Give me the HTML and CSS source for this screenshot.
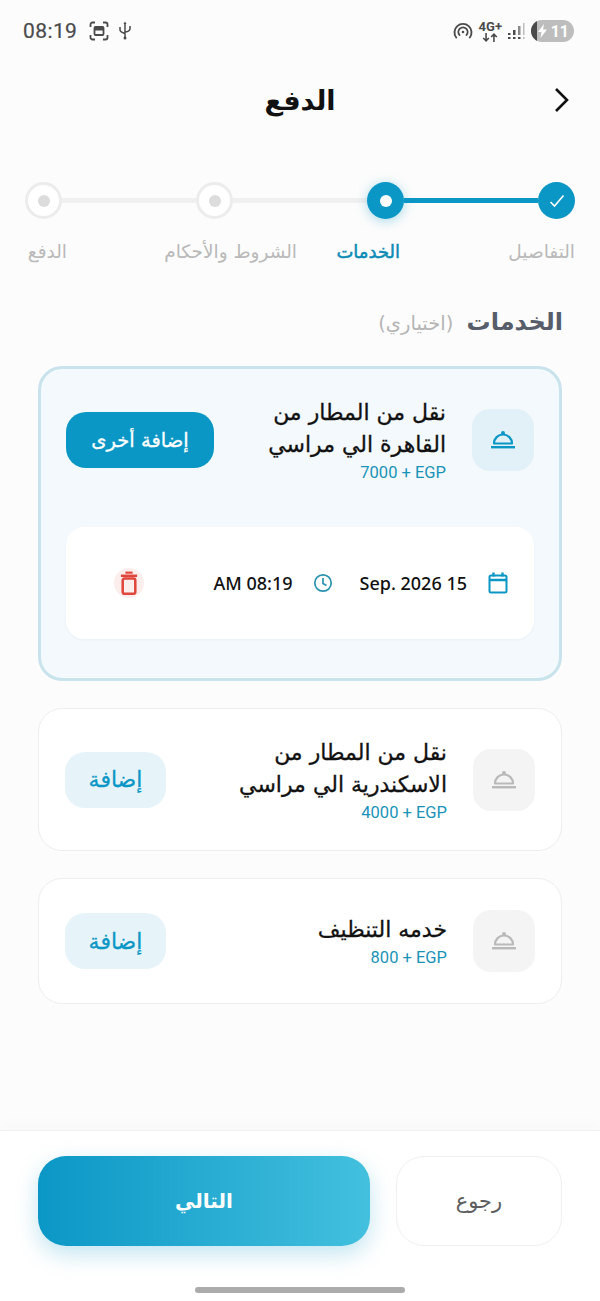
FILE: index.html
```html
<!DOCTYPE html>
<html lang="ar" dir="rtl">

<head>
    <meta charset="UTF-8">
    <meta name="viewport" content="width=device-width, initial-scale=1.0">
    <title>الدفع</title>
    <link rel="stylesheet" href="styles.css">
</head>

<body>
    <svg class="defs" width="0" height="0" aria-hidden="true">
        <symbol id="cloche" viewBox="0 0 26 20">
            <path d="M4 13.5a9 9 0 0 1 18 0z" fill="none" stroke="currentColor" stroke-width="2.2" stroke-linejoin="round"/>
            <circle cx="13" cy="3" r="2" fill="currentColor"/>
            <rect x="1" y="16" width="24" height="2.4" fill="currentColor"/>
        </symbol>
    </svg>

    <!-- status bar -->
    <div class="status-bar" dir="ltr">
        <div class="status-left">
            <span class="status-time">08:19</span>
            <svg width="20" height="20" viewBox="0 0 20 20" fill="none" stroke="#4a4a4a" stroke-width="1.8">
                <path d="M1.5 6V3.5a2 2 0 0 1 2-2H6M14 1.500h2.500a2 2 0 0 1 2 2V6M18.500 14v2.500a2 2 0 0 1-2 2H14M6 18.500H3.500a2 2 0 0 1-2-2V14"/>
                <rect x="5.500" y="6" width="9" height="8" rx="1"/>
                <rect x="6" y="6.500" width="8" height="3" fill="#4a4a4a" stroke="none"/>
            </svg>
            <svg width="14" height="20" viewBox="0 0 14 20" fill="none" stroke="#4a4a4a" stroke-width="1.500">
                <path d="M7 2v15M2 6v2.500c0 1.500 1 2.500 2.500 3L7 12.500M12 5v2.500c0 1.500-1 2.500-2.500 3L7 11"/>
                <circle cx="7" cy="17" r="1.500" fill="#4a4a4a" stroke="none"/>
                <path d="M7 .5l1.500 2.500h-3z" fill="#4a4a4a" stroke="none"/>
            </svg>
        </div>
        <div class="status-right">
            <svg width="20" height="20" viewBox="0 0 20 20" fill="none" stroke="#4a4a4a" stroke-width="1.900" stroke-linecap="round">
                <path d="M3.200 16.500a8.500 8.500 0 1 1 13.600 0"/>
                <path d="M6.500 14a4.600 4.600 0 1 1 7 0"/>
                <circle cx="10" cy="11" r="1.300" fill="#4a4a4a" stroke="none"/>
            </svg>
            <span class="status-net">4G+<svg width="16" height="9" viewBox="0 0 14 8" fill="none" stroke="#4a4a4a" stroke-width="1.400"><path d="M3.500 0v7M1 4.500L3.500 7 6 4.500M10.500 8V1M8 3.500L10.500 1 13 3.500"/></svg></span>
            <svg width="17" height="18" viewBox="0 0 17 18" fill="#4a4a4a">
                <rect x="0" y="11" width="2.500" height="2"/><rect x="0" y="15" width="2.500" height="2"/>
                <rect x="5" y="8" width="2.500" height="5"/><rect x="5" y="15" width="2.500" height="2"/>
                <rect x="10" y="4" width="2.500" height="9" fill="#8a8a8a"/><rect x="10" y="15" width="2.500" height="2"/>
                <rect x="15" y="1" width="1.500" height="12" fill="#bdbdbd"/><rect x="15" y="15" width="1.500" height="2" fill="#bdbdbd"/>
            </svg>
            <span class="status-battery">
                <span class="battery-level"></span>
                <svg width="9" height="14" viewBox="0 0 9 14" fill="#fff"><path d="M6 0L0 8h3.500L2.500 14 9 5.500H5z"/></svg>
                <span>11</span>
            </span>
        </div>
    </div>

    <!-- header -->
    <header class="top-bar">
        <svg class="back-icon" width="16" height="26" viewBox="0 0 16 26" fill="none" stroke="#111" stroke-width="2.600">
            <path d="M2 2l11 11L2 24"/>
        </svg>
        <h1>الدفع</h1>
        <span></span>
    </header>

    <!-- steps -->
    <div class="stepper">
        <span class="step step-done">
            <svg width="16" height="14" viewBox="0 0 16 14" fill="none" stroke="#fff" stroke-width="1.600"><path d="M1.500 8l4 4L14.500 1.500"/></svg>
        </span>
        <span class="step-line step-line-on"></span>
        <span class="step step-current"><i></i></span>
        <span class="step-line"></span>
        <span class="step"><i></i></span>
        <span class="step-line"></span>
        <span class="step"><i></i></span>
    </div>
    <div class="step-labels">
        <span>التفاصيل</span>
        <span class="label-on">الخدمات</span>
        <span>الشروط والأحكام</span>
        <span>الدفع</span>
    </div>

    <h2 class="section-title">الخدمات <small>(اختياري)</small></h2>

    <main class="services">
        <section class="card card-selected">
            <div class="card-row">
                <span class="icon-box"><svg width="26" height="20"><use href="#cloche"/></svg></span>
                <div class="card-text">
                    <h3>نقل من المطار من<br>القاهرة الي مراسي</h3>
                    <p class="price">7000 + EGP</p>
                </div>
                <button class="btn-add btn-add-more">إضافة أخرى</button>
            </div>
            <div class="booking">
                <svg class="booking-date-icon" width="20" height="22" viewBox="0 0 20 22" fill="none" stroke="#0b97c6" stroke-width="2">
                    <rect x="1.500" y="3.500" width="17" height="17" rx="1.500"/>
                    <path d="M1.500 8h17M5.500 .5v4M14.500 .5v4" stroke-width="2.400"/>
                </svg>
                <span class="booking-value booking-date">Sep. 2026 15</span>
                <svg width="20" height="20" viewBox="0 0 20 20" fill="none" stroke="#2a93ae" stroke-width="1.700">
                    <circle cx="10" cy="10" r="8.200"/>
                    <path d="M10 5v5.500l3.500 2"/>
                </svg>
                <span class="booking-value">AM 08:19</span>
                <span class="trash">
                    <svg width="18" height="26" viewBox="0 0 20 28" fill="none" stroke="#e0463c" stroke-width="2.800">
                        <path d="M1 6h18"/>
                        <path d="M6 2.500h8" stroke-width="2.400"/>
                        <rect x="3" y="9" width="14" height="17" rx="2"/>
                    </svg>
                </span>
            </div>
        </section>

        <section class="card">
            <div class="card-row">
                <span class="icon-box icon-box-off"><svg width="26" height="20"><use href="#cloche"/></svg></span>
                <div class="card-text">
                    <h3>نقل من المطار من<br>الاسكندرية الي مراسي</h3>
                    <p class="price">4000 + EGP</p>
                </div>
                <button class="btn-add">إضافة</button>
            </div>
        </section>

        <section class="card card-small">
            <div class="card-row">
                <span class="icon-box icon-box-off"><svg width="26" height="20"><use href="#cloche"/></svg></span>
                <div class="card-text">
                    <h3>خدمه التنظيف</h3>
                    <p class="price">800 + EGP</p>
                </div>
                <button class="btn-add">إضافة</button>
            </div>
        </section>
    </main>

    <!-- bottom actions -->
    <footer class="bottom-bar">
        <div class="bottom-actions">
            <button class="btn-back">رجوع</button>
            <button class="btn-next">التالي</button>
        </div>
        <div class="home-bar"></div>
    </footer>
</body>

</html>
```

FILE: styles.css
```css
/* base */
body {
    font-family: "DejaVu Sans", sans-serif;
    margin: 0;
    height: 1301px;
    display: flex;
    flex-direction: column;
    background: #fcfcfc;
    color: #111;
    overflow: hidden;
}

.defs {
    position: absolute;
}

h1, h2, h3, p {
    margin: 0;
}

button {
    font-family: inherit;
    border: none;
}

/* status bar */
.status-bar {
    height: 62px;
    box-sizing: border-box;
    padding: 0 26px 0 23px;
    display: flex;
    justify-content: space-between;
    align-items: center;
}

.status-left, .status-right {
    display: flex;
    align-items: center;
    gap: 9px;
}

.status-right {
    gap: 6px;
}

.status-time {
    font-family: Roboto, sans-serif;
    font-size: 21px;
    letter-spacing: 0.4px;
    color: #4a4a4a;
    margin-right: 3px;
    -webkit-text-stroke: 0.2px;
}

.status-net {
    display: flex;
    flex-direction: column;
    align-items: center;
    font-family: Roboto, sans-serif;
    font-size: 13px;
    font-weight: 700;
    line-height: 12px;
    color: #4a4a4a;
}

.status-battery {
    position: relative;
    width: 43px;
    height: 22px;
    border-radius: 11px;
    overflow: hidden;
    background: #bdbdbd;
    display: flex;
    align-items: center;
    justify-content: flex-end;
    gap: 4px;
    padding-right: 5px;
    box-sizing: border-box;
    font-family: Roboto, sans-serif;
    font-size: 16px;
    font-weight: 700;
    color: #fff;
}

.battery-level {
    position: absolute;
    left: 0;
    top: 0;
    width: 6px;
    height: 22px;
    background: #4a4a4a;
}

/* header */
.top-bar {
    display: grid;
    grid-template-columns: 1fr auto 1fr;
    align-items: center;
    height: 76px;
    padding: 0 30px;
}

.top-bar h1 {
    font-size: 27px;
    font-weight: 700;
}

/* stepper */
.stepper {
    display: flex;
    align-items: center;
    margin-top: 44px;
    padding: 0 25px 0 25px;
}

.step {
    position: relative;
    width: 37px;
    height: 37px;
    box-sizing: border-box;
    flex: none;
    border-radius: 50%;
    border: 3px solid #ececec;
    background: #fff;
    display: flex;
    align-items: center;
    justify-content: center;
}

.step i {
    width: 12px;
    height: 12px;
    border-radius: 50%;
    background: #dcdcdc;
}

.step-done, .step-current {
    border: none;
    background: #0b97c6;
}

.step-current {
    box-shadow: 0 2px 12px rgba(11, 151, 198, 0.35);
}

.step-current i {
    background: #fff;
}

.step-line {
    flex: 1;
    height: 5px;
    background: #f0f0f0;
}

.step-line-on {
    background: #0b97c6;
}

.step-labels {
    display: grid;
    grid-template-columns: 175px 103px 230px auto;
    margin-top: 21px;
    padding: 0 25px;
    font-size: 18.500px;
    line-height: 24px;
    color: #b9b9b9;
}

.step-labels .label-on {
    color: #0b8bb5;
    font-size: 18px;
    -webkit-text-stroke: 0.5px;
}

.section-title {
    margin-top: 40px;
    padding: 0 37px;
    font-size: 24px;
    line-height: 36px;
    color: #575e6a;
}

.section-title small {
    font-size: 19.500px;
    font-weight: 400;
    color: #b5b5b5;
    margin-right: 5px;
}

/* service cards */
.services {
    display: flex;
    flex-direction: column;
    gap: 27px;
    margin-top: 24px;
    padding: 0 38px;
}

.card {
    background: #fff;
    border: 1.500px solid #eeeeee;
    border-radius: 24px;
    padding: 22px 26px 22px 26px;
    height: 143px;
    box-sizing: border-box;
    display: flex;
    flex-direction: column;
    justify-content: center;
}

.card-small {
    height: 126px;
}

.card-selected {
    height: 315px;
    border: 3px solid #c8e3ec;
    background: #f3f9fc;
    justify-content: flex-start;
    padding: 28px 25px 0 25px;
}

.card-row {
    display: flex;
    align-items: center;
    gap: 26px;
}

.icon-box {
    width: 62px;
    height: 62px;
    flex: none;
    border-radius: 18px;
    background: #e2f1f7;
    color: #0b97c6;
    display: flex;
    align-items: center;
    justify-content: center;
}

.icon-box-off {
    background: #f4f4f4;
    color: #b9b9b9;
}

.card-text {
    flex: 1;
}

.card-text h3 {
    font-size: 22px;
    font-weight: 400;
    line-height: 32px;
    -webkit-text-stroke: 0.3px;
}

.price {
    direction: ltr;
    text-align: right;
    margin-top: 2px;
    font-family: Roboto, sans-serif;
    font-size: 16.500px;
    line-height: 20px;
    color: #1a93b8;
}

.btn-add {
    width: 101px;
    height: 56px;
    flex: none;
    border-radius: 20px;
    background: #e6f4f9;
    color: #0b97c6;
    font-size: 22px;
    -webkit-text-stroke: 0.3px;
}

.btn-add-more {
    width: 148px;
    background: #0b97c6;
    color: #fff;
    font-size: 19.500px;
}

.booking {
    display: flex;
    align-items: center;
    height: 112px;
    margin-top: 44px;
    padding: 0 26px;
    background: #fff;
    border-radius: 18px;
    box-shadow: 0 1px 3px rgba(0, 0, 0, 0.04);
}

.booking-value {
    direction: ltr;
    font-family: "Noto Sans", sans-serif;
    font-size: 18px;
    font-weight: 500;
}

.booking-date {
    margin: 0 21px 0 27px;
}

.booking-date-icon {
    flex: none;
}

.booking .booking-value:not(.booking-date) {
    margin-right: 20px;
}

.trash {
    width: 30px;
    height: 30px;
    margin-right: auto;
    margin-left: 22px;
    border-radius: 50%;
    background: #fbeeed;
    display: flex;
    align-items: center;
    justify-content: center;
}

/* bottom */
.bottom-bar {
    margin-top: auto;
    height: 171px;
    box-sizing: border-box;
    background: #fff;
    border-top: 1px solid #f1f1f1;
    box-shadow: 0 -8px 12px rgba(0, 0, 0, 0.015);
    padding: 25px 38px 0;
}

.bottom-actions {
    display: flex;
    gap: 26px;
}

.btn-back {
    width: 166px;
    height: 90px;
    flex: none;
    border: 1.500px solid #f0f0f0;
    border-radius: 28px;
    background: #fff;
    color: #5d5d5d;
    font-size: 21px;
}

.btn-next {
    flex: 1;
    height: 90px;
    border-radius: 28px;
    background: linear-gradient(to right, #0b97c6, #43c0de);
    box-shadow: 0 8px 22px rgba(11, 151, 198, 0.25);
    color: #fff;
    font-size: 20px;
    font-weight: 700;
}

.home-bar {
    width: 210px;
    height: 6px;
    margin: 41px auto 0;
    border-radius: 3px;
    background: #ababab;
}
```
